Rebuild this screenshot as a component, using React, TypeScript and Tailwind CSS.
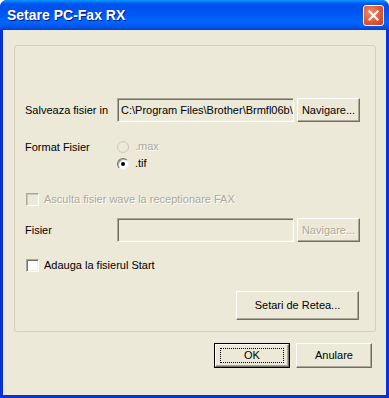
const font = { fontFamily: '"Liberation Sans", Arial, sans-serif' };

function Button({ label, disabled, focused, className = '' }: { label: string; disabled?: boolean; focused?: boolean; className?: string }) {
  return (
    <div
      className={`flex items-center justify-center bg-[#ECE9D8] text-[11px] ${
        focused ? 'border border-black' : ''
      } ${className}`}
    >
      <div className="flex h-full w-full items-center justify-center border-t border-l border-t-white border-l-white border-r border-b border-r-[#716F64] border-b-[#716F64] shadow-[inset_-1px_-1px_0_#ACA899]">
        {focused ? (
          <div className="flex h-[calc(100%-6px)] w-[calc(100%-8px)] items-center justify-center border border-dotted border-black">
            {label}
          </div>
        ) : (
          <span className={disabled ? 'text-[#ACA899] [text-shadow:1px_1px_0_#fff]' : 'text-black'}>{label}</span>
        )}
      </div>
    </div>
  );
}

function TextBox({ value, className = '' }: { value?: string; className?: string }) {
  return (
    <div
      className={`flex items-center overflow-hidden whitespace-nowrap bg-[#ECE9D8] border-t border-l border-t-[#ACA899] border-l-[#ACA899] border-r border-b border-r-white border-b-white shadow-[inset_1px_1px_0_#716F64,inset_-1px_-1px_0_#F1EFE2] pl-[3px] text-[11px] text-black ${className}`}
    >
      {value}
    </div>
  );
}

function CheckBox({ label, disabled }: { label: string; disabled?: boolean }) {
  return (
    <div className="flex h-[17px] items-center gap-[5px]">
      <div
        className={`h-[13px] w-[13px] border-t border-l border-r border-b ${
          disabled
            ? 'bg-[#ECE9D8] border-t-[#ACA899] border-l-[#ACA899] border-r-white border-b-white shadow-[inset_1px_1px_0_#C9C7BA]'
            : 'bg-white border-t-[#ACA899] border-l-[#ACA899] border-r-white border-b-white shadow-[inset_1px_1px_0_#716F64,inset_-1px_-1px_0_#F1EFE2]'
        }`}
      />
      <span className={`text-[11px] ${disabled ? 'text-[#ACA899] [text-shadow:1px_1px_0_#fff]' : 'text-black'}`}>{label}</span>
    </div>
  );
}

function Radio({ label, checked, disabled }: { label: string; checked?: boolean; disabled?: boolean }) {
  return (
    <div className="flex h-[17px] items-center gap-[6px]">
      <div
        className={`flex h-[12px] w-[12px] items-center justify-center rounded-full border ${
          disabled
            ? 'border-[#CAC8BB] bg-[#ECE9D8]'
            : 'border-t-[#716F64] border-l-[#716F64] border-r-[#F1EFE2] border-b-[#F1EFE2] bg-white shadow-[inset_1px_1px_0_#ACA899]'
        }`}
      >
        {checked && <div className="h-[4px] w-[4px] rounded-full bg-black" />}
      </div>
      <span className={`text-[11px] ${disabled ? 'text-[#ACA899] [text-shadow:1px_1px_0_#fff]' : 'text-black'}`}>{label}</span>
    </div>
  );
}

export default function App() {
  return (
    <div className="h-[398px] w-[389px] overflow-hidden" style={font}>
      <div className="flex h-full w-full flex-col rounded-t-[7px] bg-[#0831D9]">
        {/* title bar */}
        <div className="relative flex h-[30px] shrink-0 items-center rounded-t-[7px] bg-[linear-gradient(to_bottom,#0997FF_0px,#0053EE_4px,#0050EE_8px,#0058F4_14px,#0066FF_22px,#0055EB_27px,#0042C8_30px)] pl-[7px]">
          <span className="text-[14px] font-bold text-white [text-shadow:1px_1px_0_#0A1883]">Setare PC-Fax RX</span>
          <div className="absolute right-[5px] top-[5px] flex h-[21px] w-[21px] items-center justify-center rounded-[3px] border border-white bg-[radial-gradient(circle_at_35%_35%,#F08C6C,#E0532F_60%,#C4401F)]">
            <svg width="11" height="11" viewBox="0 0 11 11">
              <path d="M1.5 1.5 L9.5 9.5 M9.5 1.5 L1.5 9.5" stroke="white" strokeWidth="2.2" strokeLinecap="square" />
            </svg>
          </div>
        </div>

        {/* body */}
        <div className="mx-[3px] mb-[3px] flex flex-1 flex-col bg-[#ECE9D8] px-[11px] pt-[15px]">
          <div className="flex h-[287px] w-[362px] flex-col rounded-[3px] border border-[#D0D0BF] pl-[10px] pt-[52px]">
            <div className="flex h-[24px] items-center">
              <span className="w-[92px] text-[11px] text-black">Salveaza fisier in</span>
              <TextBox className="h-[24px] w-[177px]" value={'C:\\Program Files\\Brother\\Brmfl06b\\'} />
              <Button className="ml-[3px] h-[24px] w-[63px]" label="Navigare..." />
            </div>

            <div className="mt-[16px] flex">
              <span className="w-[92px] pt-[1px] text-[11px] text-black">Format Fisier</span>
              <div className="flex flex-col">
                <Radio label=".max" disabled />
                <Radio label=".tif" checked />
              </div>
            </div>

            <div className="mt-[19px] pl-[1px]">
              <CheckBox label="Asculta fisier wave la receptionare FAX" disabled />
            </div>

            <div className="mt-[10px] flex h-[24px] items-center">
              <span className="w-[92px] text-[11px] text-black">Fisier</span>
              <TextBox className="h-[24px] w-[177px]" />
              <Button className="ml-[3px] h-[24px] w-[63px]" label="Navigare..." disabled />
            </div>

            <div className="mt-[15px] pl-[1px]">
              <CheckBox label="Adauga la fisierul Start" />
            </div>

            <div className="mt-[17px] flex justify-end pr-[16px]">
              <Button className="h-[29px] w-[123px]" label="Setari de Retea..." />
            </div>
          </div>

          <div className="mt-[11px] flex justify-end gap-[6px] pr-[3px]">
            <Button className="h-[25px] w-[76px]" label="OK" focused />
            <Button className="h-[25px] w-[76px]" label="Anulare" />
          </div>
        </div>
      </div>
    </div>
  );
}
